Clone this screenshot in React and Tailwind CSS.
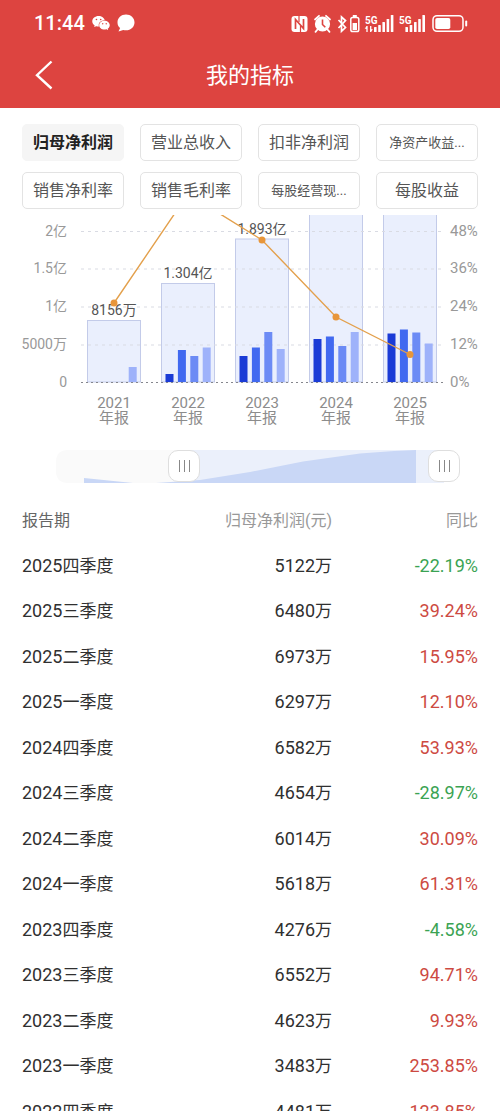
import { useState } from "react";
import { AiFillWechat } from "react-icons/ai";

const metrics = [
  { label: "归母净利润" },
  { label: "营业总收入" },
  { label: "扣非净利润" },
  { label: "净资产收益...", small: true },
  { label: "销售净利率" },
  { label: "销售毛利率" },
  { label: "每股经营现...", small: true },
  { label: "每股收益" },
];

const rows = [
  ["2025", "四季度", "5122", "-22.19%"],
  ["2025", "三季度", "6480", "39.24%"],
  ["2025", "二季度", "6973", "15.95%"],
  ["2025", "一季度", "6297", "12.10%"],
  ["2024", "四季度", "6582", "53.93%"],
  ["2024", "三季度", "4654", "-28.97%"],
  ["2024", "二季度", "6014", "30.09%"],
  ["2024", "一季度", "5618", "61.31%"],
  ["2023", "四季度", "4276", "-4.58%"],
  ["2023", "三季度", "6552", "94.71%"],
  ["2023", "二季度", "4623", "9.93%"],
  ["2023", "一季度", "3483", "253.85%"],
  ["2022", "四季度", "4481", "123.85%"],
];

const BASE = 382;
const quarterColors = ["#1a3bd6", "#4169f0", "#6c8bf5", "#9eb2fa"];
const years = [
  { year: "2021", cx: 114, top: 320.5, label: "8156万", q: [0, 0, 0, 15] },
  { year: "2022", cx: 188, top: 283.5, label: "1.304亿", q: [8, 32, 26, 34.5] },
  { year: "2023", cx: 262, top: 239, label: "1.893亿", q: [26, 34.5, 50, 33] },
  { year: "2024", cx: 336, top: 200, q: [43, 45.5, 36, 50] },
  { year: "2025", cx: 410, top: 195, q: [48.5, 52.5, 49.5, 38.5] },
];
const gridLines = [
  { y: 231.5, left: "2亿", right: "48%" },
  { y: 269, left: "1.5亿", right: "36%" },
  { y: 307, left: "1亿", right: "24%" },
  { y: 345, left: "5000万", right: "12%" },
  { y: 382.5, left: "0", right: "0%" },
];
const trend = [
  [114, 303],
  [188, 194],
  [262, 240],
  [336, 317],
  [410, 354.5],
];

function StatusIcons() {
  return (
    <svg viewBox="290 13 178 21" className="h-[21px] w-[178px]" fill="#fff" aria-hidden="true">
      {/* NFC */}
      <rect x="291.5" y="16" width="16" height="16" rx="3" />
      <path d="M295.5 29V19.5L303.5 28.5V19" fill="none" stroke="#dd4440" strokeWidth="1.7" />
      <path d="M299 16v6M300.5 26v6" stroke="#dd4440" strokeWidth="1.2" />
      {/* alarm */}
      <circle cx="322.5" cy="24" r="7.6" />
      <path d="M315 19.5l4-3.7M330 19.5l-4-3.7M317.5 29.5l-2 2.3M327.5 29.5l2 2.3" stroke="#fff" strokeWidth="1.8" strokeLinecap="round" />
      <path d="M322.5 19.5v5l2.8 2.8" fill="none" stroke="#dd4440" strokeWidth="1.6" />
      {/* bluetooth */}
      <path d="M338.5 20l7 7.5-4 3.7V17l4 3.6-7 7.4" fill="none" stroke="#fff" strokeWidth="1.7" />
      <rect x="350.8" y="17.5" width="8" height="14" rx="1.8" fill="none" stroke="#fff" strokeWidth="1.5" />
      <rect x="352.8" y="15" width="4" height="2" />
      <rect x="352.6" y="23" width="4.4" height="7" />
      {/* first signal */}
      <text x="365" y="23.5" fontSize="10" fontWeight="700" fontFamily="Roboto, sans-serif">5G</text>
      <path d="M367 26v6M370.7 26v6" stroke="#fff" strokeWidth="1.3" />
      <path d="M364.6 28.6l2.4-2.6v3zM373 29.4l-2.3 2.6v-3z" />
      <rect x="374" y="27" width="2.6" height="5" rx=".6" />
      <rect x="378.2" y="25" width="2.6" height="7" rx=".6" />
      <rect x="382.4" y="22" width="2.6" height="10" rx=".6" />
      <rect x="386.6" y="19" width="2.6" height="13" rx=".6" />
      <rect x="390.8" y="15" width="2.6" height="17" rx=".6" />
      {/* second signal */}
      <text x="399" y="23.5" fontSize="10" fontWeight="700" fontFamily="Roboto, sans-serif">5G</text>
      <rect x="405.4" y="27" width="2.6" height="5" rx=".6" />
      <rect x="409.7" y="25" width="2.6" height="7" rx=".6" />
      <rect x="414" y="22" width="2.6" height="10" rx=".6" />
      <rect x="418.2" y="19" width="2.6" height="13" rx=".6" />
      <rect x="422.4" y="15" width="2.6" height="17" rx=".6" />
      {/* battery */}
      <rect x="433" y="15.7" width="30" height="15.6" rx="4" fill="none" stroke="#fff" strokeWidth="1.5" />
      <rect x="435.3" y="18" width="15" height="11" rx="1.8" />
      <rect x="465.2" y="20.5" width="2" height="6" rx="1" />
    </svg>
  );
}

function Chart() {
  return (
    <svg
      viewBox="0 215 500 217"
      className="block h-auto w-full"
      fontFamily="Roboto, 'Noto Sans CJK SC', sans-serif"
      role="img"
      aria-label="归母净利润"
    >
      {years.map((d) => (
        <rect key={d.year} x={d.cx - 26.5} y={d.top} width="53" height={BASE - d.top} fill="#eaeffd" stroke="#c3cbe9" />
      ))}
      {gridLines.map((g, i) => (
        <g key={g.y} fill="#999">
          <line
            x1="81"
            x2="443"
            y1={g.y}
            y2={g.y}
            stroke={i === 4 ? "#85868c" : "#d9dbe3"}
            strokeDasharray={i === 4 ? "2 3" : "3 4"}
          />
          <text x="67" y={g.y + 4} fontSize="14" textAnchor="end">{g.left}</text>
          <text x="450" y={g.y + 4} fontSize="15">{g.right}</text>
        </g>
      ))}
      {years.map((d) =>
        d.q.map((h, i) => (
          <rect key={d.year + i} x={d.cx - 22.5 + i * 12.4} y={BASE - h} width="8" height={h} fill={quarterColors[i]} />
        ))
      )}
      {years.map((d) => (
        <g key={d.year} textAnchor="middle">
          {d.label && <text x={d.cx} y={d.top - 5.5} fontSize="14" fill="#555">{d.label}</text>}
          <text x={d.cx} y="408" fontSize="15" fill="#8c8c8c">{d.year}</text>
          <text x={d.cx} y="423" fontSize="15" fill="#8c8c8c">年报</text>
        </g>
      ))}
      <polyline points={trend.map((p) => p.join(",")).join(" ")} fill="none" stroke="#e3a04c" strokeWidth="1.4" />
      {trend.map(([x, y]) => (
        <circle key={x} cx={x} cy={y} r="3.5" fill="#e8963a" />
      ))}
    </svg>
  );
}

const thumb =
  "pointer-events-none absolute inset-0 h-8 w-full appearance-none bg-transparent [&::-webkit-slider-thumb]:pointer-events-auto [&::-webkit-slider-thumb]:size-8 [&::-webkit-slider-thumb]:appearance-none [&::-webkit-slider-thumb]:rounded-[10px] [&::-webkit-slider-thumb]:border [&::-webkit-slider-thumb]:border-solid [&::-webkit-slider-thumb]:border-[#dedede] [&::-webkit-slider-thumb]:[background:linear-gradient(#888,#888)_10px_9px/1px_12px_no-repeat,linear-gradient(#888,#888)_15px_9px/1px_12px_no-repeat,linear-gradient(#888,#888)_20px_9px/1px_12px_no-repeat,#fff]";

function RangeSlider() {
  const [start, setStart] = useState(30);
  const [end, setEnd] = useState(100);
  const from = 16 + start * 3.72;
  const to = 16 + end * 3.72;
  return (
    <div className="relative mt-[18px] mr-10 ml-14 h-[34px]">
      <svg viewBox="0 0 404 33" preserveAspectRatio="none" className="block h-[33px] w-full" aria-hidden="true">
        <path d="M12 0H388V33H12Q0 33 0 21V12Q0 0 12 0Z" fill="#fafafa" />
        <rect x={from} y="0" width={Math.max(0, to - from)} height="33" fill="#ebf0fb" />
        <path d="M28 28L77 33H28ZM100 33L144 30L194 22L247 11.5L304 3.5L338 1L360 0V33Z" fill="#c9d7f6" />
      </svg>
      <input type="range" aria-label="开始年份" min="0" max="100" value={start} onChange={(e) => setStart(Math.min(+e.target.value, end))} className={thumb} />
      <input type="range" aria-label="结束年份" min="0" max="100" value={end} onChange={(e) => setEnd(Math.max(+e.target.value, start))} className={thumb} />
    </div>
  );
}

export default function App() {
  const [active, setActive] = useState(0);
  return (
    <div className="flex h-screen flex-col overflow-hidden bg-white font-[Roboto,'Noto_Sans_CJK_SC',sans-serif] text-[#303030]">
      <header className="shrink-0 bg-[#dd4440] text-white">
        <div className="flex h-[46px] items-center justify-between pr-8 pl-[34px]">
          <div className="flex items-center gap-1.5">
            <span className="text-xl font-medium">11:44</span>
            <AiFillWechat className="size-5" aria-hidden="true" />
            <svg viewBox="0 0 18 18" className="size-[18px]" fill="#fff" aria-hidden="true">
              <path d="M9 .5C4.200.5.5 4 .5 8.400c0 2.300 1 4.300 2.600 5.700L1.500 17.500l4.700-1.600c.9.300 1.800.4 2.800.4 4.800 0 8.500-3.500 8.500-7.900S13.800.5 9 .5z" />
            </svg>
          </div>
          <StatusIcons />
        </div>
        <div className="grid h-[62px] grid-cols-[1fr_auto_1fr] items-center pb-1">
          <button type="button" aria-label="返回" className="ml-[34px] w-5">
            <svg viewBox="0 0 20 30" className="h-[30px] w-5" fill="none" stroke="#fff" strokeWidth="2.4" aria-hidden="true">
              <path d="M17.500 1.500L3 15.200L17.500 28.500" />
            </svg>
          </button>
          <h1 className="text-[22px]">我的指标</h1>
        </div>
      </header>

      <nav className="grid shrink-0 grid-cols-4 gap-x-4 gap-y-[11px] px-[22px] pt-4 pb-1.5">
        {metrics.map((m, i) => (
          <button
            key={m.label}
            type="button"
            aria-pressed={active === i}
            onClick={() => setActive(i)}
            className={`h-[37px] rounded-[5px] border whitespace-nowrap ${m.small ? "text-[13px]" : "text-base"} ${
              active === i ? "border-[#f5f5f5] bg-[#f5f5f5] font-bold text-[#222]" : "border-[#e3e3e3] bg-white text-[#555]"
            }`}
          >
            {m.label}
          </button>
        ))}
      </nav>

      <main className="min-h-0 flex-1 overflow-y-auto [scrollbar-width:none]">
        <Chart />
        <RangeSlider />
        <div className="px-[22px] pt-3.5">
          <table className="w-full table-fixed text-[17px]">
            <thead>
              <tr className="h-[45px] text-base text-[#999]">
                <th scope="col" className="w-[28%] text-left font-normal text-[#666]">报告期</th>
                <th scope="col" className="w-[40%] text-right font-normal">归母净利润(元)</th>
                <th scope="col" className="w-[32%] text-right font-normal">同比</th>
              </tr>
            </thead>
            <tbody>
              {rows.map(([year, quarter, value, change]) => (
                <tr key={year + quarter} className="h-[45px] even:h-[46px]">
                  <td className="whitespace-nowrap">
                    <span className="text-lg">{year}</span>
                    {quarter}
                  </td>
                  <td className="text-right">
                    <span className="text-lg">{value}</span>万
                  </td>
                  <td className={`text-right text-lg ${change.startsWith("-") ? "text-[#3ba353]" : "text-[#cd4a42]"}`}>{change}</td>
                </tr>
              ))}
            </tbody>
          </table>
        </div>
      </main>
    </div>
  );
}
